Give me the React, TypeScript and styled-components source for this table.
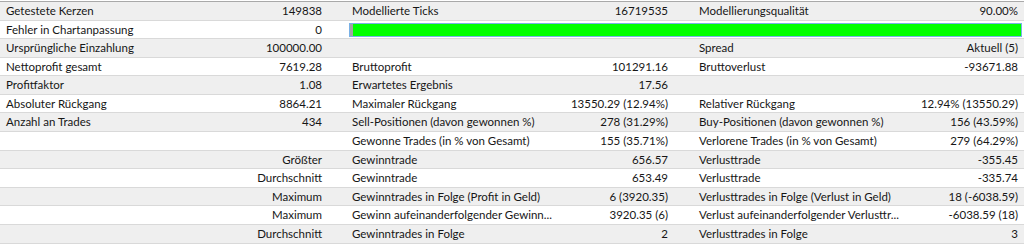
import React from "react";
import styled, { createGlobalStyle } from "styled-components";

const GlobalStyle = createGlobalStyle`
  html, body {
    margin: 0;
    padding: 0;
    background: #ffffff;
  }
  body {
    font-family: Lato, "Noto Sans", sans-serif;
    font-size: 11.5px;
    color: #161616;
  }
`;

type Cell = string;
type Line = [Cell, Cell, Cell, Cell, Cell, Cell] | "progress";

const rows: Line[] = [
  ["Getestete Kerzen", "149838", "Modellierte Ticks", "16719535", "Modellierungsqualität", "90.00%"],
  "progress",
  ["Ursprüngliche Einzahlung", "100000.00", "", "", "Spread", "Aktuell (5)"],
  ["Nettoprofit gesamt", "7619.28", "Bruttoprofit", "101291.16", "Bruttoverlust", "-93671.88"],
  ["Profitfaktor", "1.08", "Erwartetes Ergebnis", "17.56", "", ""],
  ["Absoluter Rückgang", "8864.21", "Maximaler Rückgang", "13550.29 (12.94%)", "Relativer Rückgang", "12.94% (13550.29)"],
  ["Anzahl an Trades", "434", "Sell-Positionen (davon gewonnen %)", "278 (31.29%)", "Buy-Positionen (davon gewonnen %)", "156 (43.59%)"],
  ["", "", "Gewonne Trades (in % von Gesamt)", "155 (35.71%)", "Verlorene Trades (in % von Gesamt)", "279 (64.29%)"],
  ["", "Größter", "Gewinntrade", "656.57", "Verlusttrade", "-355.45"],
  ["", "Durchschnitt", "Gewinntrade", "653.49", "Verlusttrade", "-335.74"],
  ["", "Maximum", "Gewinntrades in Folge (Profit in Geld)", "6 (3920.35)", "Verlusttrades in Folge (Verlust in Geld)", "18 (-6038.59)"],
  ["", "Maximum", "Gewinn aufeinanderfolgender Gewinn...", "3920.35 (6)", "Verlust aufeinanderfolgender Verlusttr...", "-6038.59 (18)"],
  ["", "Durchschnitt", "Gewinntrades in Folge", "2", "Verlusttrades in Folge", "3"],
];

const Table = styled.div`
  margin-top: 1px;
  border-top: 1px solid #a9a9a9;
  width: 1024px;
`;

const Row = styled.div<{ $odd: boolean }>`
  display: grid;
  grid-template-columns: 220px 126px 214px 133px 220px 111px;
  height: 18.58px;
  box-sizing: border-box;
  border-bottom: 1px solid #d9d9d9;
  background: ${(p) => (p.$odd ? "#ffffff" : "#efefef")};
`;

const Label = styled.div`
  padding-left: 6px;
  line-height: 17.5px;
  white-space: nowrap;
  overflow: hidden;
`;

const Value = styled.div<{ $pad: number }>`
  padding-right: ${(p) => p.$pad}px;
  text-align: right;
  line-height: 17.5px;
  white-space: nowrap;
`;

const BarCell = styled.div`
  grid-column: 3 / 7;
  padding: 2px 2px 1px 3px;
  display: flex;
`;

const Bar = styled.div`
  flex: 1;
  display: flex;
  border: 1px solid #79b1e6;
  background: #00ff00;
`;

const BarStart = styled.div`
  width: 3px;
  background: #a3a3a3;
`;

const pads = [24, 25, 6];

export default function App() {
  return (
    <>
      <GlobalStyle />
      <Table>
        {rows.map((r, i) =>
          r === "progress" ? (
            <Row key={i} $odd={i % 2 === 1}>
              <Label>Fehler in Chartanpassung</Label>
              <Value $pad={pads[0]}>0</Value>
              <BarCell>
                <Bar>
                  <BarStart />
                </Bar>
              </BarCell>
            </Row>
          ) : (
            <Row key={i} $odd={i % 2 === 1}>
              {[0, 1, 2].map((g) => (
                <React.Fragment key={g}>
                  <Label>{r[g * 2]}</Label>
                  <Value $pad={pads[g]}>{r[g * 2 + 1]}</Value>
                </React.Fragment>
              ))}
            </Row>
          )
        )}
      </Table>
    </>
  );
}
